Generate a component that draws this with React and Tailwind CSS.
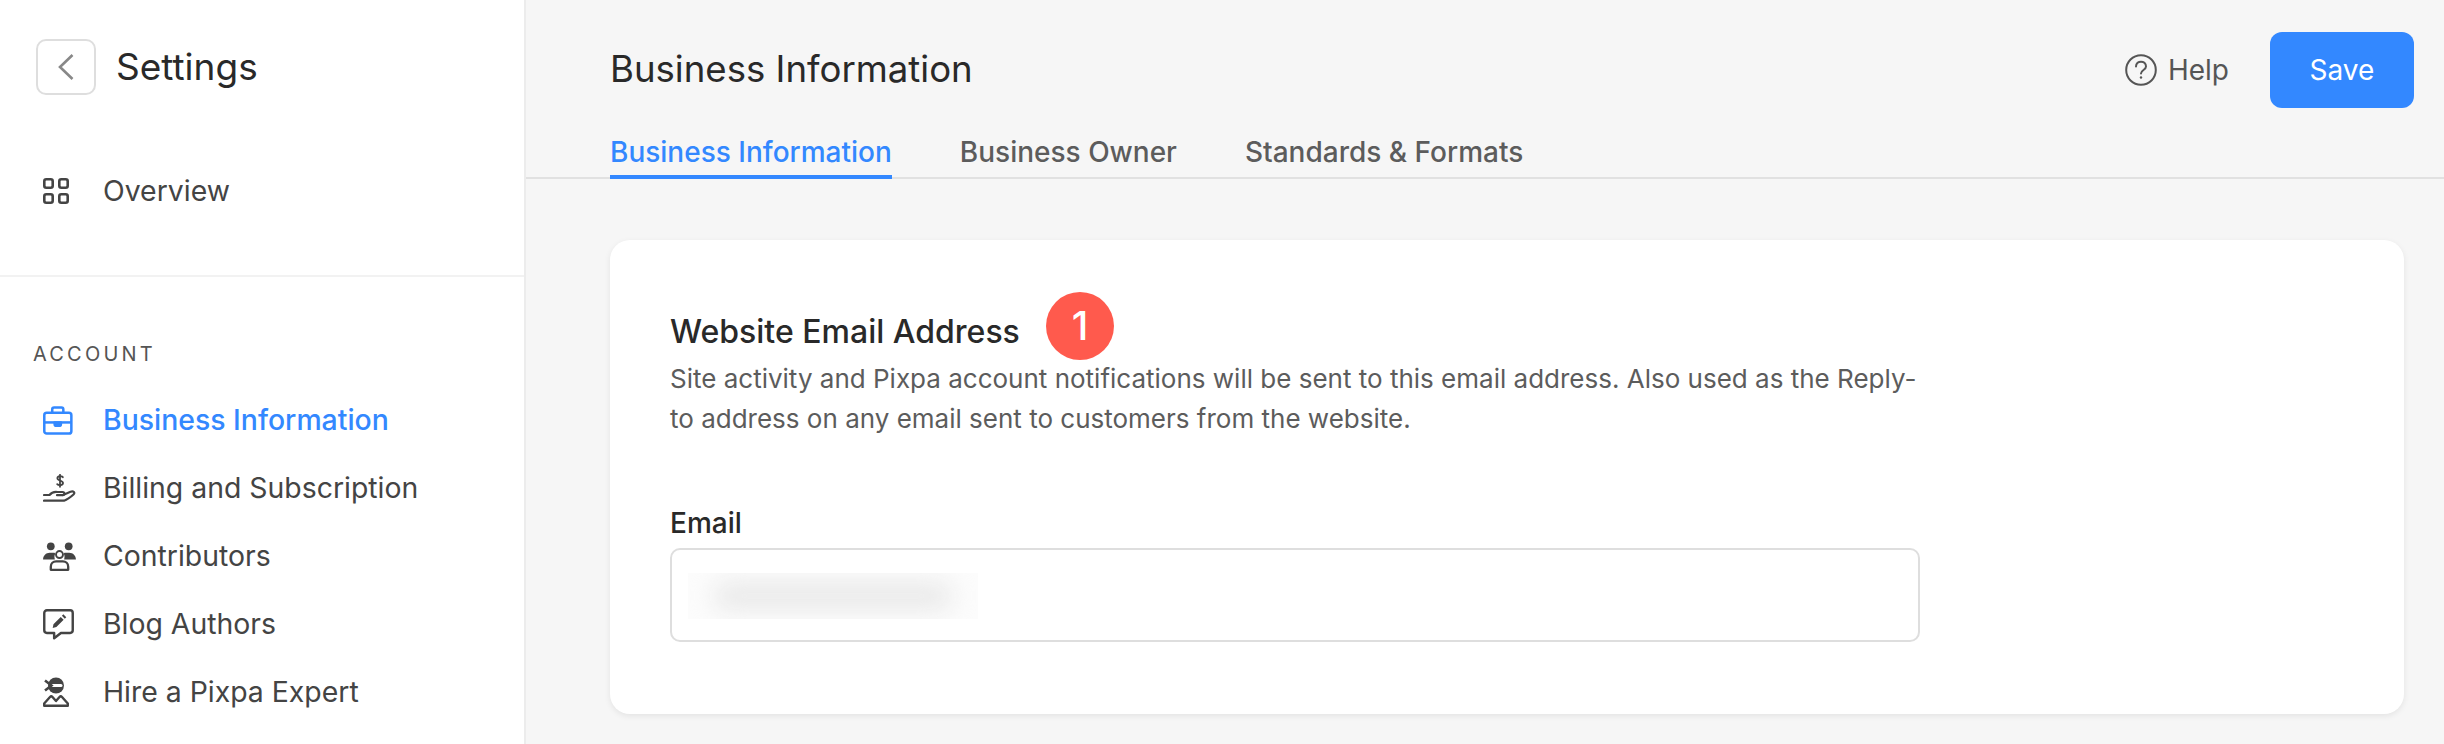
import React from "react";

const Grid = () => (
  <svg width="26" height="26" viewBox="0 0 26 26" fill="none" stroke="#444" strokeWidth="2.6">
    <rect x="1.3" y="1.3" width="8.4" height="8.4" rx="2" />
    <rect x="16.3" y="1.3" width="8.4" height="8.4" rx="2" />
    <rect x="1.3" y="16.3" width="8.4" height="8.4" rx="2" />
    <rect x="16.3" y="16.3" width="8.4" height="8.4" rx="2" />
  </svg>
);

const Briefcase = () => (
  <svg width="31" height="29" viewBox="0 0 32 30" fill="none" stroke="#3388ff" strokeWidth="2.6" strokeLinejoin="round">
    <rect x="1.3" y="7" width="28" height="21.5" rx="2.5" />
    <path d="M9.5 7V3.5a2 2 0 0 1 2-2h7.5a2 2 0 0 1 2 2V7" />
    <path d="M1.3 17h28" />
    <path d="M12 17h6.5v1.5a2 2 0 0 1-2 2h-2.500a2 2 0 0 1-2-2z" fill="#3388ff" />
  </svg>
);

const Hand = () => (
  <svg width="33" height="29" viewBox="0 0 33 29" fill="none" stroke="#444" strokeWidth="2.2" strokeLinecap="round" strokeLinejoin="round">
    <path d="M19.800 3.200C18.600 1.800 14.400 1.700 14.400 4.300c0 2.900 5.600 1.900 5.600 4.800 0 2.600-4.600 2.500-5.800 1M17 .8v12" strokeWidth="1.800" />
    <path d="M1 21h5.500c2.500-3.300 5.500-3.300 8-3h5c2.500 0 2.500 3.200 0 3.200H14" />
    <path d="M20 21l7.500-3.200c3-1.200 5 .9 3 2.700-3 2.700-6 5-9.500 6.200H1" />
  </svg>
);

const People = () => (
  <svg width="33" height="29" viewBox="0 0 34 30" fill="#444">
    <circle cx="8" cy="4.500" r="4" />
    <circle cx="26.500" cy="4.500" r="4" />
    <path d="M0 18c0-4 3-7 7-7h4c1 0 1.500.5 1.500 1.500-.8 1.200-1 3.200-.3 5.500z" />
    <path d="M34 18c0-4-3-7-7-7h-4c-1 0-1.500.5-1.500 1.500.8 1.200 1 3.200.3 5.500z" />
    <circle cx="17" cy="13" r="3.600" fill="none" stroke="#444" strokeWidth="2" />
    <path d="M8 28.800v-3.300c0-3.300 2.500-5.500 5.500-5.500h7c3 0 5.500 2.200 5.500 5.500v3.300z" fill="none" stroke="#444" strokeWidth="2.400" strokeLinejoin="round" />
  </svg>
);

const ChatPen = () => (
  <svg width="31" height="31" viewBox="0 0 32 32" fill="none">
    <path d="M4 1.300h24a2.700 2.700 0 0 1 2.700 2.700v18a2.700 2.700 0 0 1-2.700 2.700H18.500l-7 5.500v-5.500H4A2.700 2.700 0 0 1 1.300 22V4A2.700 2.700 0 0 1 4 1.300z" stroke="#444" strokeWidth="2.500" strokeLinejoin="round" />
    <path d="M10 19.500l.8-3.800 7.500-7.500 3 3-7.500 7.500zM19.500 7l1.500-1.500 3 3-1.500 1.500z" fill="#444" />
  </svg>
);

const Ninja = () => (
  <svg width="26" height="30" viewBox="0 0 26 30" fill="#444">
    <circle cx="13" cy="8.500" r="8" />
    <rect x="7" y="7" width="12.500" height="3" rx="1.500" fill="#fff" />
    <path d="M2 3.500l6.500 5L2 13.500" fill="none" stroke="#444" strokeWidth="2.600" />
    <path d="M1.200 28.800v-2.300l5.800-6.500c.8-.8 1.700-.8 2.500 0l3.500 4 3.500-4c.8-.8 1.700-.8 2.500 0l5.800 6.500v2.300z" fill="none" stroke="#444" strokeWidth="2.400" strokeLinejoin="round" />
  </svg>
);

const Help = () => (
  <svg width="32" height="32" viewBox="0 0 32 32" fill="none" stroke="#555" strokeWidth="2">
    <circle cx="16" cy="16" r="14.800" />
    <path d="M11 12.500c0-6.500 10-6.500 10 0 0 3.500-5 3.500-5 7" strokeLinecap="round" />
    <circle cx="16" cy="23.500" r="1.200" fill="#555" stroke="none" />
  </svg>
);

const NavItem = ({ icon, label, active }) => (
  <div className="flex h-[68px] items-center pl-[43px]">
    <span className="flex w-[60px] shrink-0 items-center">{icon}</span>
    <span className={active ? "text-[28.4px] font-medium text-[#3388ff]" : "text-[28.4px] text-[#444444]"}>{label}</span>
  </div>
);

export default function App() {
  return (
    <div className="flex h-[744px] w-[2444px] overflow-hidden bg-[#f6f6f6] font-['Inter',sans-serif]">
      <aside className="flex w-[526px] shrink-0 flex-col border-r-2 border-[#ececec] bg-white">
        <div className="flex h-[277px] flex-col border-b-2 border-[#f2f2f2]">
          <div className="flex items-center gap-[20px] pl-[36px] pt-[39px]">
            <button className="flex h-[56px] w-[60px] items-center justify-center rounded-[10px] border-2 border-[#dedede] bg-white">
              <svg width="18" height="28" viewBox="0 0 18 28" fill="none" stroke="#888" strokeWidth="2.600">
                <path d="M15.500 2L3 14l12.500 12" />
              </svg>
            </button>
            <h1 className="text-[37px] leading-[56px] font-normal text-[#292929]">Settings</h1>
          </div>
          <div className="mt-[76px] flex h-[40px] items-center pl-[43px]">
            <span className="flex w-[60px] items-center"><Grid /></span>
            <span className="text-[28.4px] text-[#444444]">Overview</span>
          </div>
        </div>
        <div className="pl-[33px] pt-[63px] text-[20px] leading-[28px] tracking-[0.16em] text-[#555555]">ACCOUNT</div>
        <nav className="mt-[18px] flex flex-col">
          <NavItem active icon={<Briefcase />} label="Business Information" />
          <NavItem icon={<Hand />} label="Billing and Subscription" />
          <NavItem icon={<People />} label="Contributors" />
          <NavItem icon={<ChatPen />} label="Blog Authors" />
          <NavItem icon={<Ninja />} label="Hire a Pixpa Expert" />
        </nav>
      </aside>
      <main className="flex min-w-0 flex-1 flex-col">
        <header className="flex h-[179px] flex-col justify-between border-b-2 border-[#e1e1e1] pl-[84px] pr-[85px]">
          <div className="flex items-start justify-between pt-[32px]">
            <h2 className="mt-[12px] text-[36.6px] leading-[50px] font-normal text-[#292929]">Business Information</h2>
            <div className="mr-[-55px] flex items-center">
              <Help />
              <span className="ml-[11px] text-[28px] text-[#555555]">Help</span>
              <button className="ml-[41px] flex h-[76px] w-[144px] items-center justify-center rounded-[12px] bg-[#3388ff] text-[28px] text-white">Save</button>
            </div>
          </div>
          <div className="flex gap-[68px]">
            <div className="mb-[-2px] h-[47px] border-b-4 border-[#3388ff] text-[28px] leading-[40px] font-medium text-[#3388ff]">Business Information</div>
            <div className="text-[28px] leading-[40px] font-medium text-[#5c5c5c]">Business Owner</div>
            <div className="text-[28px] leading-[40px] font-medium text-[#5c5c5c]">Standards &amp; Formats</div>
          </div>
        </header>
        <div className="pl-[84px] pr-[40px] pt-[61px]">
          <section className="relative h-[474px] rounded-[20px] bg-white pl-[60px] pt-[72px] shadow-[0_2px_6px_rgba(0,0,0,0.08)]">
            <h3 className="text-[32px] leading-[40px] font-medium text-[#292929]">Website Email Address</h3>
            <span className="absolute left-[436px] top-[52px] flex h-[68px] w-[68px] items-center justify-center rounded-full bg-[#ff5a4d] text-[40px] font-medium text-white">1</span>
            <p className="mt-[7px] w-[1262px] text-[26px] leading-[40px] text-[#5c5c5c]">
              Site activity and Pixpa account notifications will be sent to this email address. Also used as the Reply-to address on any email sent to customers from the website.
            </p>
            <label className="mt-[64px] block text-[28px] leading-[40px] font-medium text-[#292929]">Email</label>
            <div className="mt-[5px] flex h-[94px] w-[1250px] items-center rounded-[10px] border-2 border-[#dedede] bg-white pl-[16px]">
              <div className="mt-[2px] flex h-[46px] w-[290px] items-center justify-center overflow-hidden bg-[#fcfcfc]">
                <div className="h-[28px] w-[240px] rounded-full bg-[#e9e9e9] blur-[12px]" />
              </div>
            </div>
          </section>
        </div>
      </main>
    </div>
  );
}
